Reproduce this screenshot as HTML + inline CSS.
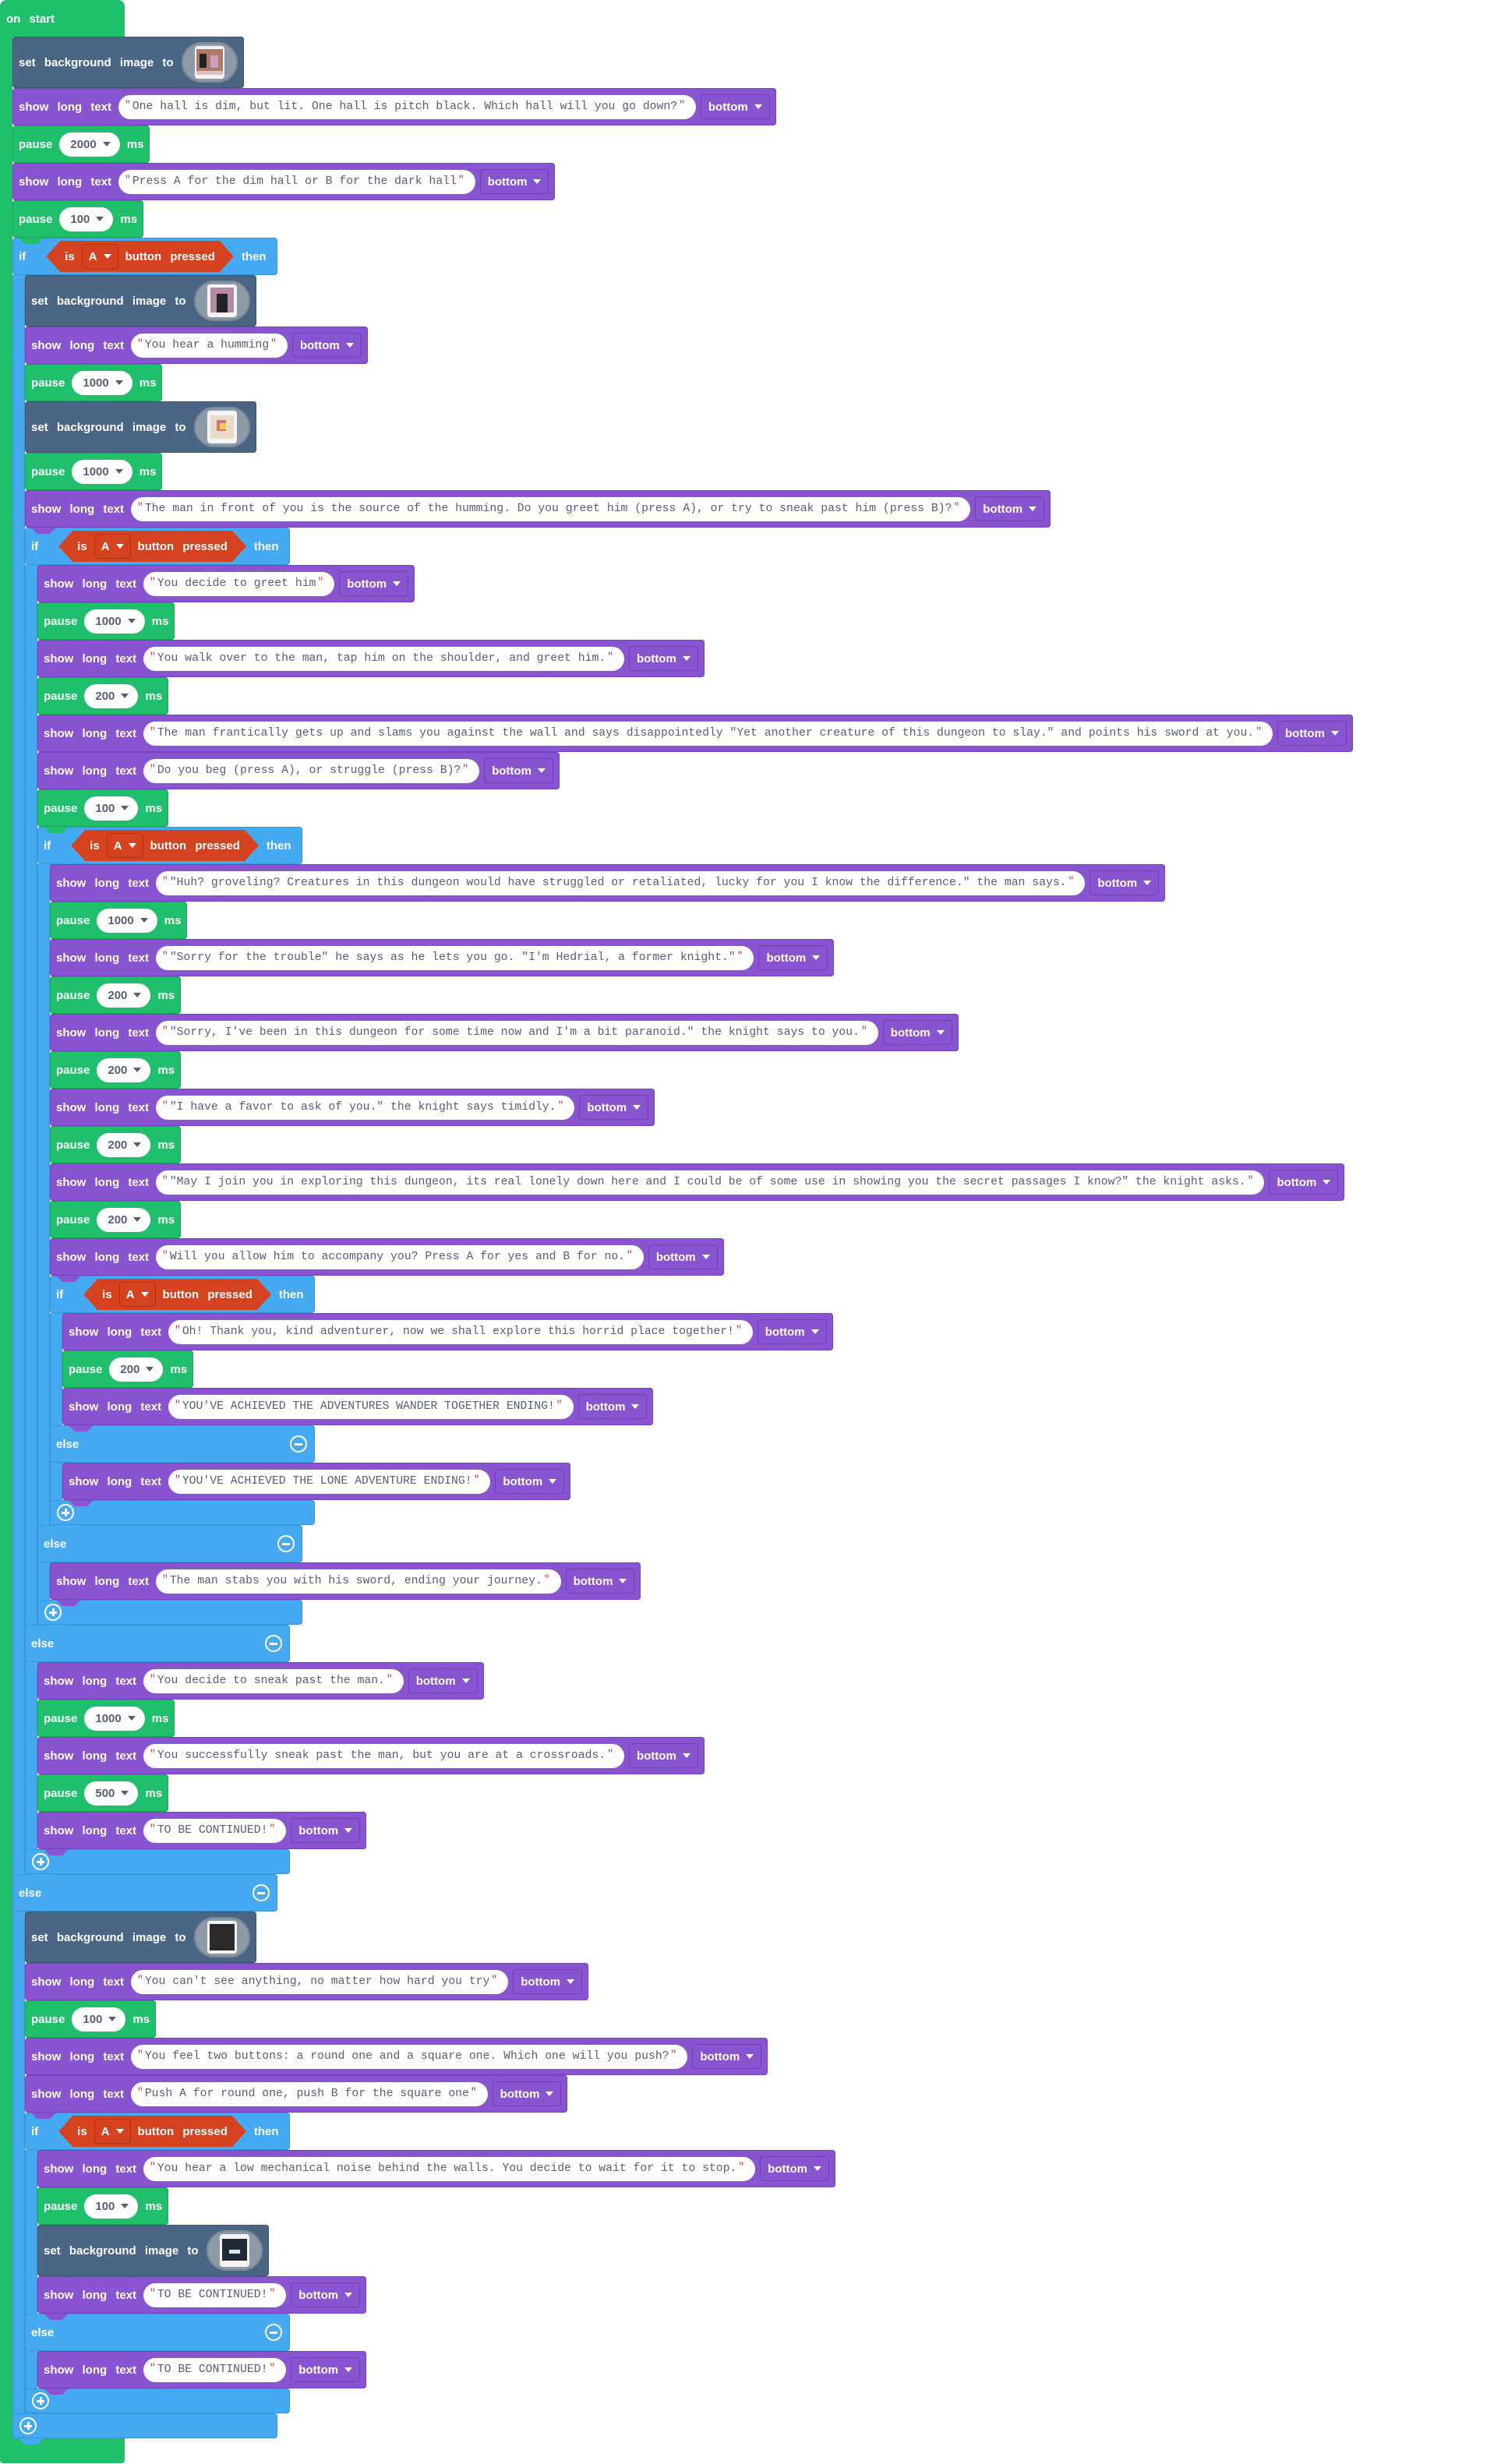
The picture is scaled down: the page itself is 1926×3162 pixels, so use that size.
<!DOCTYPE html>
<html><head><meta charset="utf-8"><style>
html,body{margin:0;padding:0;background:#fff;width:1926px;height:3162px;overflow:hidden;position:relative}
.b{position:absolute;height:48px;display:flex;align-items:center;padding:0 8px;box-sizing:border-box;color:#fff;font:bold 15px "Liberation Sans",sans-serif;word-spacing:7px;border-radius:4px;white-space:pre}
.b::after{content:"";position:absolute;left:8px;bottom:-8px;width:32px;height:8px;background:inherit;clip-path:polygon(0 0,100% 0,75% 100%,25% 100%)}
.sh{background:#8854d0;box-shadow:inset 0 0 0 1px #7442bd}
.pa{background:#20bf6b;box-shadow:inset 0 0 0 1px #1aa65c}
.sb{background:#4b6584;height:66px;box-shadow:inset 0 0 0 1px #3f566f}
.bl{background:#45aaf2;box-shadow:inset 0 0 0 1px #3a95d6}
.f{background:#fff;height:31px;border-radius:16px;margin-left:9px;padding:0 14px 0 8px;display:flex;align-items:center;font:14.75px "Liberation Mono",monospace;color:#575e75;word-spacing:0;font-weight:normal}
.f i{font-style:normal;color:#c33;font-size:13px;margin-right:2px;align-self:flex-start;margin-top:5px}
.f i.e{margin-left:2px;margin-right:0}
.d{margin-left:6px;height:32px;border:1px solid #6d3fba;border-radius:4px;padding:0 9px;display:flex;align-items:center;box-sizing:border-box;word-spacing:0}
.t{display:inline-block;width:0;height:0;border-left:5px solid transparent;border-right:5px solid transparent;border-top:6px solid #fff;margin-left:8px}
.n{background:#fff;height:31px;border-radius:16px;margin:0 9px;padding:0 12px 0 14px;display:flex;align-items:center;color:#575e75;word-spacing:0}
.n .t{border-top-color:#575e75}
.bub{margin-left:10px;width:72px;height:52px;border-radius:26px;background:#8f9aa8;box-shadow:inset 0 0 0 2px #7d8896;display:flex;align-items:center;justify-content:center}
.img{width:38px;height:42px;background:#f4f4f4;border-radius:4px;position:relative;overflow:hidden}
.hx{margin-left:26px;height:40px;background:#d5421f;padding:0 24px;display:flex;align-items:center;clip-path:polygon(0 50%,18px 0,calc(100% - 18px) 0,100% 50%,calc(100% - 18px) 100%,18px 100%)}
.hx .a{margin:0 9px;height:32px;border:1px solid #a8341a;border-radius:4px;padding:0 8px;display:flex;align-items:center;box-sizing:border-box;word-spacing:0}
.c{position:absolute;width:22px;height:22px;border:2px solid #fff;border-radius:50%;box-sizing:border-box}
.c::before{content:"";position:absolute;left:4px;top:8px;width:10px;height:3px;background:#fff}
.c.p::after{content:"";position:absolute;left:8px;top:4px;width:3px;height:10px;background:#fff}
.g{position:absolute;background:#20bf6b}
.a1{position:absolute;background:#45aaf2;width:16px;box-shadow:inset 1px 0 0 #3a95d6,inset -1px 0 0 #3a95d6}
</style></head><body>
<div class="g" style="left:0;top:0;width:160px;height:48px;border-radius:8px 8px 0 0"></div>
<div class="g" style="left:0;top:47px;width:16px;height:3090px"></div>
<div class="g" style="left:0;top:3129px;width:160px;height:32px;border-radius:0 0 4px 4px"></div>
<div class="b" style="left:0;top:0;height:48px;background:transparent">on start</div>

<div class="a1" style="left:16px;top:353px;height:2776px"></div>
<div class="a1" style="left:32px;top:725px;height:1680px"></div>
<div class="a1" style="left:48px;top:1109px;height:976px"></div>
<div class="a1" style="left:64px;top:1685px;height:272px"></div>
<div class="a1" style="left:32px;top:2759px;height:338px"></div>

<div class="b bl" style="left:16px;top:305px;width:340px">if<div class="hx">is<div class="a">A<span class="t"></span></div>button pressed</div><span style="margin-left:10px">then</span></div>
<div class="b bl" style="left:32px;top:677px;width:340px">if<div class="hx">is<div class="a">A<span class="t"></span></div>button pressed</div><span style="margin-left:10px">then</span></div>
<div class="b bl" style="left:48px;top:1061px;width:340px">if<div class="hx">is<div class="a">A<span class="t"></span></div>button pressed</div><span style="margin-left:10px">then</span></div>
<div class="b bl" style="left:64px;top:1637px;width:340px">if<div class="hx">is<div class="a">A<span class="t"></span></div>button pressed</div><span style="margin-left:10px">then</span></div>
<div class="b bl" style="left:32px;top:2711px;width:340px">if<div class="hx">is<div class="a">A<span class="t"></span></div>button pressed</div><span style="margin-left:10px">then</span></div>

<div class="b bl" style="left:64px;top:1829px;width:340px">else<div class="c" style="left:308px;top:13px"></div></div>
<div class="b bl" style="left:48px;top:1957px;width:340px">else<div class="c" style="left:308px;top:13px"></div></div>
<div class="b bl" style="left:32px;top:2085px;width:340px">else<div class="c" style="left:308px;top:13px"></div></div>
<div class="b bl" style="left:16px;top:2405px;width:340px">else<div class="c" style="left:308px;top:13px"></div></div>
<div class="b bl" style="left:32px;top:2969px;width:340px">else<div class="c" style="left:308px;top:13px"></div></div>

<div class="b bl" style="left:64px;top:1925px;width:340px;height:32px"><div class="c p" style="left:9px;top:5px"></div></div>
<div class="b bl" style="left:48px;top:2053px;width:340px;height:32px"><div class="c p" style="left:9px;top:5px"></div></div>
<div class="b bl" style="left:32px;top:2373px;width:340px;height:32px"><div class="c p" style="left:9px;top:5px"></div></div>
<div class="b bl" style="left:32px;top:3065px;width:340px;height:32px"><div class="c p" style="left:9px;top:5px"></div></div>
<div class="b bl" style="left:16px;top:3097px;width:340px;height:32px"><div class="c p" style="left:9px;top:5px"></div></div>

<div class="b sb" style="left:16px;top:47px">set background image to<div class="bub"><div class="img"><div style="position:absolute;left:2px;top:4px;width:34px;height:28px;background:#b07a66"></div><div style="position:absolute;left:6px;top:10px;width:9px;height:18px;background:#222"></div><div style="position:absolute;left:20px;top:12px;width:10px;height:16px;background:#c9a0c0"></div><div style="position:absolute;left:2px;top:32px;width:34px;height:5px;background:#d9bfc9"></div></div></div></div>
<div class="b sh" style="left:16px;top:113px">show long text<div class="f"><i>"</i>One hall is dim, but lit. One hall is pitch black. Which hall will you go down?<i class="e">"</i></div><div class="d">bottom<span class="t"></span></div></div>
<div class="b pa" style="left:16px;top:161px">pause<div class="n">2000<span class="t"></span></div>ms</div>
<div class="b sh" style="left:16px;top:209px">show long text<div class="f"><i>"</i>Press A for the dim hall or B for the dark hall<i class="e">"</i></div><div class="d">bottom<span class="t"></span></div></div>
<div class="b pa" style="left:16px;top:257px">pause<div class="n">100<span class="t"></span></div>ms</div>

<div class="b sb" style="left:32px;top:353px">set background image to<div class="bub"><div class="img"><div style="position:absolute;left:4px;top:4px;width:30px;height:32px;background:#b48aa6"></div><div style="position:absolute;left:12px;top:12px;width:14px;height:24px;background:#222"></div></div></div></div>
<div class="b sh" style="left:32px;top:419px">show long text<div class="f"><i>"</i>You hear a humming<i class="e">"</i></div><div class="d">bottom<span class="t"></span></div></div>
<div class="b pa" style="left:32px;top:467px">pause<div class="n">1000<span class="t"></span></div>ms</div>
<div class="b sb" style="left:32px;top:515px">set background image to<div class="bub"><div class="img"><div style="position:absolute;left:4px;top:6px;width:30px;height:30px;background:#e8dcc8"></div><div style="position:absolute;left:12px;top:12px;width:12px;height:14px;background:#c77;"></div><div style="position:absolute;left:16px;top:16px;width:8px;height:8px;background:#f2c94c"></div></div></div></div>
<div class="b pa" style="left:32px;top:581px">pause<div class="n">1000<span class="t"></span></div>ms</div>
<div class="b sh" style="left:32px;top:629px">show long text<div class="f"><i>"</i>The man in front of you is the source of the humming. Do you greet him (press A), or try to sneak past him (press B)?<i class="e">"</i></div><div class="d">bottom<span class="t"></span></div></div>

<div class="b sh" style="left:48px;top:725px">show long text<div class="f"><i>"</i>You decide to greet him<i class="e">"</i></div><div class="d">bottom<span class="t"></span></div></div>
<div class="b pa" style="left:48px;top:773px">pause<div class="n">1000<span class="t"></span></div>ms</div>
<div class="b sh" style="left:48px;top:821px">show long text<div class="f"><i>"</i>You walk over to the man, tap him on the shoulder, and greet him.<i class="e">"</i></div><div class="d">bottom<span class="t"></span></div></div>
<div class="b pa" style="left:48px;top:869px">pause<div class="n">200<span class="t"></span></div>ms</div>
<div class="b sh" style="left:48px;top:917px">show long text<div class="f"><i>"</i>The man frantically gets up and slams you against the wall and says disappointedly "Yet another creature of this dungeon to slay." and points his sword at you.<i class="e">"</i></div><div class="d">bottom<span class="t"></span></div></div>
<div class="b sh" style="left:48px;top:965px">show long text<div class="f"><i>"</i>Do you beg (press A), or struggle (press B)?<i class="e">"</i></div><div class="d">bottom<span class="t"></span></div></div>
<div class="b pa" style="left:48px;top:1013px">pause<div class="n">100<span class="t"></span></div>ms</div>

<div class="b sh" style="left:64px;top:1109px">show long text<div class="f"><i>"</i>"Huh? groveling? Creatures in this dungeon would have struggled or retaliated, lucky for you I know the difference." the man says.<i class="e">"</i></div><div class="d">bottom<span class="t"></span></div></div>
<div class="b pa" style="left:64px;top:1157px">pause<div class="n">1000<span class="t"></span></div>ms</div>
<div class="b sh" style="left:64px;top:1205px">show long text<div class="f"><i>"</i>"Sorry for the trouble" he says as he lets you go. "I'm Hedrial, a former knight."<i class="e">"</i></div><div class="d">bottom<span class="t"></span></div></div>
<div class="b pa" style="left:64px;top:1253px">pause<div class="n">200<span class="t"></span></div>ms</div>
<div class="b sh" style="left:64px;top:1301px">show long text<div class="f"><i>"</i>"Sorry, I've been in this dungeon for some time now and I'm a bit paranoid." the knight says to you.<i class="e">"</i></div><div class="d">bottom<span class="t"></span></div></div>
<div class="b pa" style="left:64px;top:1349px">pause<div class="n">200<span class="t"></span></div>ms</div>
<div class="b sh" style="left:64px;top:1397px">show long text<div class="f"><i>"</i>"I have a favor to ask of you." the knight says timidly.<i class="e">"</i></div><div class="d">bottom<span class="t"></span></div></div>
<div class="b pa" style="left:64px;top:1445px">pause<div class="n">200<span class="t"></span></div>ms</div>
<div class="b sh" style="left:64px;top:1493px">show long text<div class="f"><i>"</i>"May I join you in exploring this dungeon, its real lonely down here and I could be of some use in showing you the secret passages I know?" the knight asks.<i class="e">"</i></div><div class="d">bottom<span class="t"></span></div></div>
<div class="b pa" style="left:64px;top:1541px">pause<div class="n">200<span class="t"></span></div>ms</div>
<div class="b sh" style="left:64px;top:1589px">show long text<div class="f"><i>"</i>Will you allow him to accompany you? Press A for yes and B for no.<i class="e">"</i></div><div class="d">bottom<span class="t"></span></div></div>

<div class="b sh" style="left:80px;top:1685px">show long text<div class="f"><i>"</i>Oh! Thank you, kind adventurer, now we shall explore this horrid place together!<i class="e">"</i></div><div class="d">bottom<span class="t"></span></div></div>
<div class="b pa" style="left:80px;top:1733px">pause<div class="n">200<span class="t"></span></div>ms</div>
<div class="b sh" style="left:80px;top:1781px">show long text<div class="f"><i>"</i>YOU'VE ACHIEVED THE ADVENTURES WANDER TOGETHER ENDING!<i class="e">"</i></div><div class="d">bottom<span class="t"></span></div></div>
<div class="b sh" style="left:80px;top:1877px">show long text<div class="f"><i>"</i>YOU'VE ACHIEVED THE LONE ADVENTURE ENDING!<i class="e">"</i></div><div class="d">bottom<span class="t"></span></div></div>

<div class="b sh" style="left:64px;top:2005px">show long text<div class="f"><i>"</i>The man stabs you with his sword, ending your journey.<i class="e">"</i></div><div class="d">bottom<span class="t"></span></div></div>

<div class="b sh" style="left:48px;top:2133px">show long text<div class="f"><i>"</i>You decide to sneak past the man.<i class="e">"</i></div><div class="d">bottom<span class="t"></span></div></div>
<div class="b pa" style="left:48px;top:2181px">pause<div class="n">1000<span class="t"></span></div>ms</div>
<div class="b sh" style="left:48px;top:2229px">show long text<div class="f"><i>"</i>You successfully sneak past the man, but you are at a crossroads.<i class="e">"</i></div><div class="d">bottom<span class="t"></span></div></div>
<div class="b pa" style="left:48px;top:2277px">pause<div class="n">500<span class="t"></span></div>ms</div>
<div class="b sh" style="left:48px;top:2325px">show long text<div class="f"><i>"</i>TO BE CONTINUED!<i class="e">"</i></div><div class="d">bottom<span class="t"></span></div></div>

<div class="b sb" style="left:32px;top:2453px">set background image to<div class="bub"><div class="img"><div style="position:absolute;left:3px;top:4px;width:32px;height:34px;background:#2a2a2a"></div></div></div></div>
<div class="b sh" style="left:32px;top:2519px">show long text<div class="f"><i>"</i>You can't see anything, no matter how hard you try<i class="e">"</i></div><div class="d">bottom<span class="t"></span></div></div>
<div class="b pa" style="left:32px;top:2567px">pause<div class="n">100<span class="t"></span></div>ms</div>
<div class="b sh" style="left:32px;top:2615px">show long text<div class="f"><i>"</i>You feel two buttons: a round one and a square one. Which one will you push?<i class="e">"</i></div><div class="d">bottom<span class="t"></span></div></div>
<div class="b sh" style="left:32px;top:2663px">show long text<div class="f"><i>"</i>Push A for round one, push B for the square one<i class="e">"</i></div><div class="d">bottom<span class="t"></span></div></div>

<div class="b sh" style="left:48px;top:2759px">show long text<div class="f"><i>"</i>You hear a low mechanical noise behind the walls. You decide to wait for it to stop.<i class="e">"</i></div><div class="d">bottom<span class="t"></span></div></div>
<div class="b pa" style="left:48px;top:2807px">pause<div class="n">100<span class="t"></span></div>ms</div>
<div class="b sb" style="left:48px;top:2855px">set background image to<div class="bub"><div class="img"><div style="position:absolute;left:3px;top:6px;width:32px;height:28px;background:#1f2a36"></div><div style="position:absolute;left:12px;top:20px;width:14px;height:5px;background:#dfe6ee"></div></div></div></div>
<div class="b sh" style="left:48px;top:2921px">show long text<div class="f"><i>"</i>TO BE CONTINUED!<i class="e">"</i></div><div class="d">bottom<span class="t"></span></div></div>
<div class="b sh" style="left:48px;top:3017px">show long text<div class="f"><i>"</i>TO BE CONTINUED!<i class="e">"</i></div><div class="d">bottom<span class="t"></span></div></div>
</body></html>
